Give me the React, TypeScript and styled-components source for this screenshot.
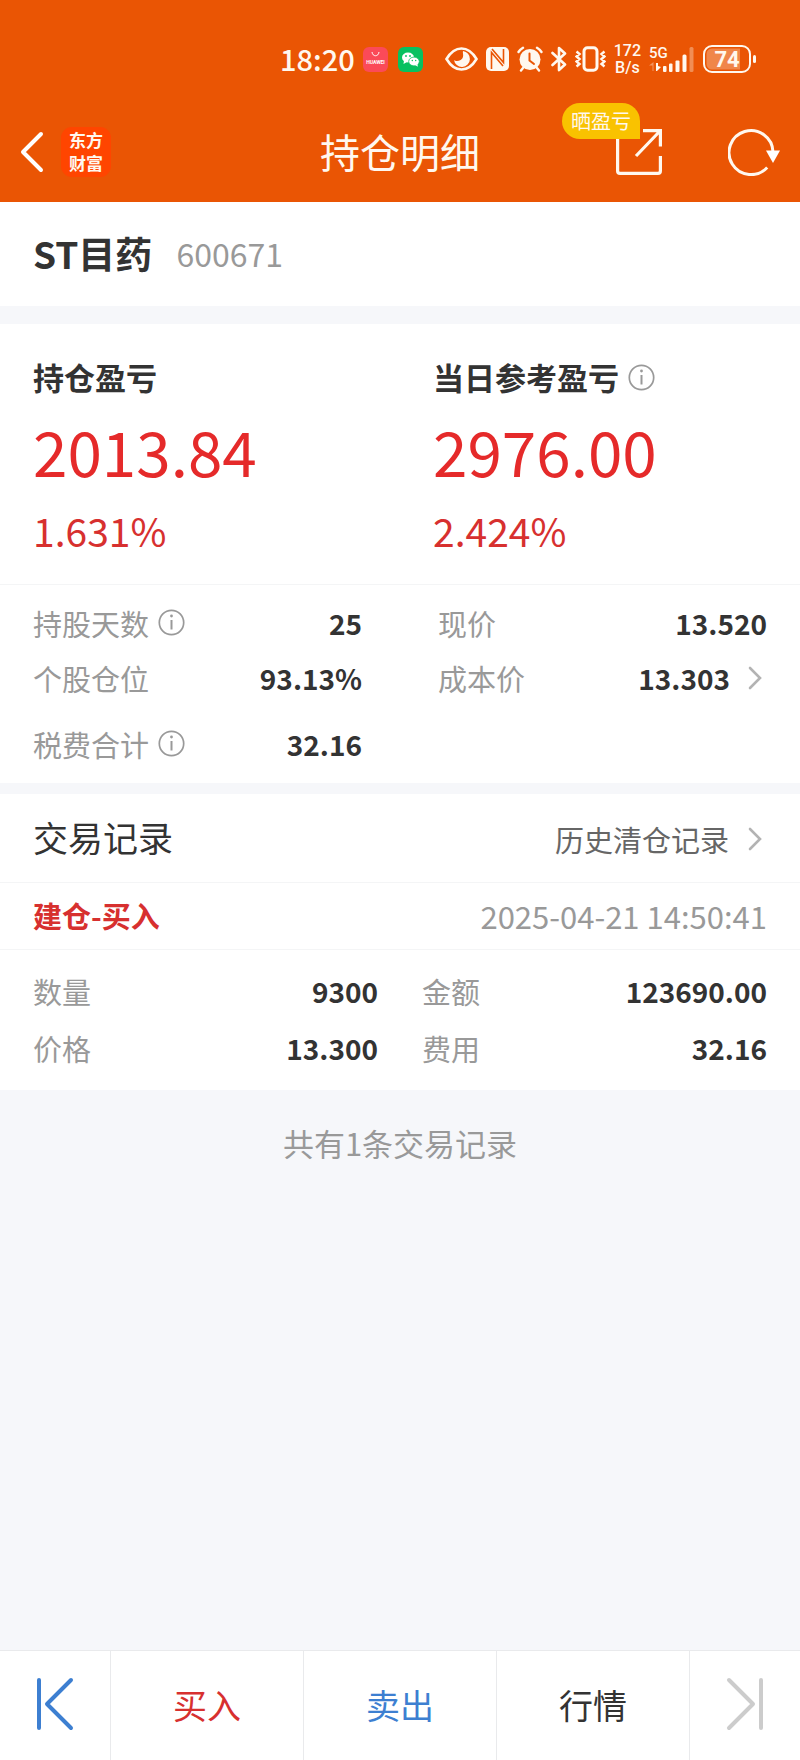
import React from "react";
import styled, { createGlobalStyle } from "styled-components";

const sans = `"Noto Sans CJK SC", "Noto Sans", sans-serif`;

const c = {
  brand: "#ea5504",
  text: "#333333",
  sub: "#666666",
  muted: "#999999",
  faint: "#b3b3b3",
  up: "#e52a2a",
  upSoft: "#d7302f",
  down: "#3d7fd1",
  page: "#f6f7fa",
  line: "#f4f5f6",
  bar: "#e9eaec",
  disabled: "#cccccc",
};

const GlobalStyle = createGlobalStyle`
  * { box-sizing: border-box; }
  body { margin: 0; background: ${c.page}; font-family: ${sans}; color: ${c.text}; }
  button { font: inherit; color: inherit; background: none; border: 0; padding: 0; cursor: pointer; }
  h1, h2, dl, dt, dd, p { margin: 0; font-weight: inherit; }
  svg { display: block; flex: none; }
`;

const Page = styled.div`
  min-height: 100vh;
  display: flex;
  flex-direction: column;
`;

const Header = styled.header`
  background: ${c.brand};
  color: #fff8ef;
`;

const StatusBar = styled.div`
  height: 102px;
  padding: 16px 44px 0 0;
  display: flex;
  align-items: center;
  justify-content: flex-end;
  gap: 8px;
`;

const Clock = styled.time`
  padding-bottom: 2px;
  font-size: 29px;
  font-weight: 500;
  line-height: 30px;
`;

const AppBadges = styled.div`
  display: flex;
  gap: 10px;
  margin-right: 14px;
`;

const NetSpeed = styled.div`
  display: flex;
  flex-direction: column;
  align-items: center;
  font-family: Roboto, sans-serif;
  font-size: 16px;
  line-height: 17px;
  font-weight: 500;
`;

const NavBar = styled.nav`
  height: 100px;
  padding: 0 20px;
  display: grid;
  grid-template-columns: 1fr auto 1fr;
  align-items: center;
`;

const NavSide = styled.div<{ $end?: boolean }>`
  display: flex;
  align-items: center;
  justify-content: ${(p) => (p.$end ? "flex-end" : "flex-start")};
  gap: ${(p) => (p.$end ? 66 : 17)}px;
`;

const NavTitle = styled.h1`
  padding-bottom: 3px;
  font-size: 40px;
  line-height: 48px;
`;

const Logo = styled.span`
  width: 50px;
  height: 50px;
  padding: 1px 0 3px;
  border-radius: 11px;
  background: #ff4500;
  display: flex;
  flex-direction: column;
  align-items: center;
  font-size: 17px;
  line-height: 23px;
  font-weight: 700;
`;

const ShareButton = styled.button`
  position: relative;
`;

const ShareTip = styled.span`
  position: absolute;
  right: 22px;
  bottom: 36px;
  padding: 0 9px;
  border-radius: 18px 18px 0 18px;
  background: #f9c200;
  font-size: 20px;
  line-height: 36px;
  white-space: nowrap;
`;

const Panel = styled.section<{ $gap?: number }>`
  background: #fff;
  margin-bottom: ${(p) => p.$gap ?? 0}px;
`;

const StockRow = styled.div`
  height: 104px;
  padding: 0 33px 2px;
  display: flex;
  align-items: center;
  gap: 24px;
`;

const StockName = styled.h2`
  font-size: 37px;
  font-weight: 700;
`;

const StockCode = styled.span`
  font-size: 32px;
  color: ${c.muted};
`;

const Profits = styled.div`
  display: grid;
  grid-template-columns: 1fr 1fr;
  padding: 30px 0 24px;
  border-bottom: 1px solid ${c.line};
`;

const Profit = styled.div`
  padding-left: 33px;
`;

const ProfitTitle = styled.h2`
  display: flex;
  align-items: center;
  gap: 9px;
  font-size: 31px;
  line-height: 46px;
  font-weight: 700;
`;

const ProfitAmount = styled.p`
  font-size: 62px;
  line-height: 100px;
  color: ${c.up};
`;

const ProfitRate = styled.p`
  font-size: 39px;
  line-height: 60px;
  color: ${c.upSoft};
`;

const Facts = styled.dl<{ $gap: number }>`
  display: grid;
  grid-template-columns: 1fr 1fr;
  column-gap: ${(p) => p.$gap}px;
  padding: 0 33px;
`;

const FactBlock = styled.div<{ $row: number; $top: number; $bottom: number; $space?: number }>`
  display: flex;
  flex-direction: column;
  gap: ${(p) => p.$space ?? 0}px;
  padding: ${(p) => p.$top}px 0 ${(p) => p.$bottom}px;

  ${Facts} > div {
    height: ${(p) => p.$row}px;
  }
`;

const FactRow = styled.div`
  display: flex;
  align-items: center;
`;

const FactLabel = styled.dt`
  display: flex;
  align-items: center;
  gap: 9px;
  margin-right: auto;
  font-size: 29px;
  color: ${c.muted};
`;

const FactValue = styled.dd`
  font-size: 28px;
  font-weight: 700;
`;

const Arrow = styled.button`
  margin: 0 5px 0 18px;
`;

const RecordHead = styled.div`
  height: 89px;
  padding: 0 33px;
  display: flex;
  align-items: center;
  justify-content: space-between;
  border-bottom: 1px solid ${c.line};
`;

const RecordTitle = styled.h2`
  padding-bottom: 4px;
  font-size: 35px;
`;

const HistoryLink = styled.a`
  display: flex;
  align-items: center;
  gap: 19px;
  padding: 2px 5px 0 0;
  font-size: 29px;
  color: ${c.sub};
  text-decoration: none;
`;

const TradeHead = styled.div`
  height: 67px;
  padding: 0 33px 2px;
  display: flex;
  align-items: center;
  justify-content: space-between;
  border-bottom: 1px solid ${c.line};
`;

const TradeKind = styled.span`
  font-size: 29px;
  font-weight: 700;
  color: ${c.upSoft};
`;

const TradeTime = styled.time`
  font-size: 31px;
  color: ${c.muted};
`;

const RecordCount = styled.p`
  flex: 1;
  padding-top: 30px;
  text-align: center;
  font-size: 31px;
  line-height: 46px;
  color: ${c.muted};
`;

const ActionBar = styled.footer`
  display: grid;
  grid-template-columns: 110px 1fr 1fr 1fr 111px;
  height: 110px;
  background: #fff;
  border-top: 1px solid ${c.bar};
`;

const Action = styled.button<{ $color: string }>`
  display: flex;
  align-items: center;
  justify-content: center;
  padding-bottom: 3px;
  font-size: 34px;
  color: ${(p) => p.$color};

  & + & {
    border-left: 1px solid ${c.bar};
  }
`;

const InfoButton = () => (
  <button type="button" aria-label="说明">
    <svg width="27" height="27" viewBox="0 0 27 27" fill="none" stroke={c.muted}>
      <circle cx="13.5" cy="13.5" r="12.2" strokeWidth="1.7" />
      <path d="M13.5 11v9.5" strokeWidth="2" />
      <circle cx="13.5" cy="7" r="1.4" fill={c.muted} stroke="none" />
    </svg>
  </button>
);

const Chevron = () => (
  <svg width="14" height="24" viewBox="0 0 14 24" fill="none" stroke={c.faint} strokeWidth="2.6" strokeLinecap="round">
    <path d="M2 2l10 10L2 22" />
  </svg>
);

const StatusIcons = () => (
  <>
    <svg width="33" height="26" viewBox="0 0 33 26" fill="none" stroke="currentColor">
      <path d="M1.5 13C6 5.5 11 2.5 16.5 2.5S27 5.5 31.5 13C27 20.5 22 23.5 16.5 23.5S6 20.5 1.5 13z" strokeWidth="2.6" />
      <path d="M18 5a8 8 0 1 1-9 9c2 2 8 1 9-3 .6-2.5-.5-4.5 0-6z" fill="currentColor" stroke="none" />
    </svg>
    <svg width="23" height="26" viewBox="0 0 23 26">
      <rect x="0" y="1" width="23" height="24" rx="5" fill="currentColor" />
      <path d="M5.5 23V6.5L17 20M6 3l11.500 13.500V3" fill="none" stroke={c.brand} strokeWidth="1.600" />
    </svg>
    <svg width="26" height="26" viewBox="0 0 26 26" fill="none" stroke="currentColor" strokeLinecap="round">
      <circle cx="13" cy="13.5" r="10.5" fill="currentColor" stroke="none" />
      <path d="M1.5 6A14 14 0 0 1 6 1.8M24.5 6A14 14 0 0 0 20 1.8M6 22l-2 2.5M20 22l2 2.5" strokeWidth="2.4" />
      <path d="M12.5 7.5v7l4.5 3.5" stroke={c.brand} strokeWidth="2" />
    </svg>
    <svg width="16" height="26" viewBox="0 0 16 26" fill="none" stroke="currentColor" strokeWidth="2.6" strokeLinejoin="round" strokeLinecap="round">
      <path d="M1.5 7L14 18.5 8 24V2l6 5.5L1.5 19" />
    </svg>
    <svg width="31" height="26" viewBox="0 0 31 26" fill="none" stroke="currentColor">
      <rect x="9" y="1.7" width="13" height="22.6" rx="3.5" strokeWidth="3" />
      <path d="M1.5 5.5l3 2.5-3 2.5 3 2.5-3 2.5 3 2.5-3 2.5M29.5 5.5l-3 2.5 3 2.5-3 2.5 3 2.5-3 2.5 3 2.5" strokeWidth="2.4" />
    </svg>
  </>
);

const Signal = () => (
  <svg width="46" height="28" viewBox="0 0 46 28" fill="currentColor">
    <text x="0" y="13" fontFamily="Roboto, sans-serif" fontSize="15" fontWeight="500">5G</text>
    <path d="M3.5 26v-5.5H0L4.5 17v9z" opacity=".4" />
    <path d="M7 18h2v3l3 1-4 4H7z" />
    <rect x="14" y="21" width="3.5" height="6" rx="1" />
    <rect x="20" y="18.5" width="3.5" height="8.5" rx="1" />
    <rect x="26.5" y="15.5" width="4" height="11.5" rx="1" />
    <rect x="33.5" y="9.5" width="4" height="17.5" rx="1.5" />
    <rect x="40.5" y="2" width="4" height="25" rx="1.5" opacity=".35" />
  </svg>
);

const Battery = () => (
  <svg width="53" height="28" viewBox="0 0 53 28" fill="none" stroke="currentColor">
    <rect x="1" y="1" width="46" height="26" rx="8" strokeWidth="2" />
    <path d="M9 3.5h28v21H9a5.5 5.5 0 0 1-5.5-5.5V9A5.5 5.5 0 0 1 9 3.5z" fill="currentColor" stroke="none" opacity=".3" />
    <rect x="50" y="10" width="3" height="8" rx="1.5" fill="currentColor" stroke="none" />
    <text x="24" y="22" textAnchor="middle" fontFamily="Roboto, sans-serif" fontSize="22" fontWeight="700" fill="currentColor" stroke="none">74</text>
  </svg>
);

const HuaweiBadge = () => (
  <svg width="25" height="25" viewBox="0 0 25 25" fill="none">
    <rect width="25" height="25" rx="6" fill="#fb4a58" />
    <path d="M9 5c.5 5 6.5 5 7 0" stroke="#fff" strokeWidth="1" />
    <text x="12.5" y="17" textAnchor="middle" fontFamily="Roboto, sans-serif" fontSize="5" fontWeight="700" fill="#fff">HUAWEI</text>
  </svg>
);

const WechatBadge = () => (
  <svg width="25" height="25" viewBox="0 0 25 25">
    <rect width="25" height="25" rx="6" fill="#07c160" />
    <g fill="#fff">
      <ellipse cx="10" cy="10.5" rx="6" ry="5" />
      <path d="M6 13.5l-.5 3.5 3.5-2z" />
      <ellipse cx="16" cy="14.5" rx="5.3" ry="4.4" stroke="#07c160" strokeWidth=".8" />
      <path d="M17 18l2.8 1.8-.3-2.8z" />
    </g>
    <g fill="#07c160">
      <circle cx="8" cy="9" r=".9" />
      <circle cx="12" cy="9" r=".9" />
      <circle cx="14.3" cy="13.5" r=".7" />
      <circle cx="17.7" cy="13.5" r=".7" />
    </g>
  </svg>
);

type FactProps = { label: string; value: string; info?: boolean; more?: boolean };

const Fact = ({ label, value, info, more }: FactProps) => (
  <FactRow>
    <FactLabel>
      {label}
      {info && <InfoButton />}
    </FactLabel>
    <FactValue>{value}</FactValue>
    {more && (
      <Arrow type="button" aria-label={`${label}详情`}>
        <Chevron />
      </Arrow>
    )}
  </FactRow>
);

export default function App() {
  return (
    <Page>
      <GlobalStyle />
      <Header>
        <StatusBar>
          <Clock>18:20</Clock>
          <AppBadges>
            <HuaweiBadge />
            <WechatBadge />
          </AppBadges>
          <StatusIcons />
          <NetSpeed>
            <span>172</span>
            <span>B/s</span>
          </NetSpeed>
          <Signal />
          <Battery />
        </StatusBar>
        <NavBar>
          <NavSide>
            <button type="button" aria-label="返回">
              <svg width="24" height="42" viewBox="0 0 24 42" fill="none" stroke="#fff" strokeWidth="4" strokeLinecap="round" strokeLinejoin="round">
                <path d="M21 3L3 21l18 18" />
              </svg>
            </button>
            <Logo>
              <span>东方</span>
              <span>财富</span>
            </Logo>
          </NavSide>
          <NavTitle>持仓明细</NavTitle>
          <NavSide $end>
            <ShareButton type="button">
              <svg width="46" height="46" viewBox="0 0 46 46" fill="none" stroke="currentColor" strokeWidth="3.2">
                <path d="M1.6 8v34a2.4 2.4 0 0 0 2.4 2.4h38a2.4 2.4 0 0 0 2.4-2.4V27" />
                <path d="M27 1.6h17.4V17.5M43.5 2.5L20 27" />
              </svg>
              <ShareTip>晒盈亏</ShareTip>
            </ShareButton>
            <button type="button" aria-label="刷新">
              <svg width="52" height="48" viewBox="0 0 52 48" fill="none" stroke="currentColor" strokeWidth="3">
                <path d="M39.2 39.5A22 22 0 1 1 45 24" />
                <path d="M38 22.5h14l-7 12.5z" fill="#fff" stroke="none" />
              </svg>
            </button>
          </NavSide>
        </NavBar>
      </Header>

      <Panel $gap={18}>
        <StockRow>
          <StockName>ST目药</StockName>
          <StockCode>600671</StockCode>
        </StockRow>
      </Panel>

      <Panel $gap={11}>
        <Profits>
          <Profit>
            <ProfitTitle>持仓盈亏</ProfitTitle>
            <ProfitAmount>2013.84</ProfitAmount>
            <ProfitRate>1.631%</ProfitRate>
          </Profit>
          <Profit>
            <ProfitTitle>
              当日参考盈亏
              <InfoButton />
            </ProfitTitle>
            <ProfitAmount>2976.00</ProfitAmount>
            <ProfitRate>2.424%</ProfitRate>
          </Profit>
        </Profits>
        <FactBlock $row={55} $top={10} $bottom={12} $space={11}>
          <Facts $gap={76}>
            <Fact label="持股天数" value="25" info />
            <Fact label="现价" value="13.520" />
            <Fact label="个股仓位" value="93.13%" />
            <Fact label="成本价" value="13.303" more />
          </Facts>
          <Facts $gap={76}>
            <Fact label="税费合计" value="32.16" info />
          </Facts>
        </FactBlock>
      </Panel>

      <Panel>
        <RecordHead>
          <RecordTitle>交易记录</RecordTitle>
          <HistoryLink href="#history">
            历史清仓记录
            <Chevron />
          </HistoryLink>
        </RecordHead>
        <TradeHead>
          <TradeKind>建仓-买入</TradeKind>
          <TradeTime>2025-04-21 14:50:41</TradeTime>
        </TradeHead>
        <FactBlock $row={57} $top={12} $bottom={14}>
          <Facts $gap={44}>
            <Fact label="数量" value="9300" />
            <Fact label="金额" value="123690.00" />
            <Fact label="价格" value="13.300" />
            <Fact label="费用" value="32.16" />
          </Facts>
        </FactBlock>
      </Panel>

      <RecordCount>共有1条交易记录</RecordCount>

      <ActionBar>
        <Action type="button" aria-label="上一个" $color={c.down}>
          <svg width="38" height="54" viewBox="0 0 38 54" fill="none" stroke="currentColor" strokeWidth="4" strokeLinecap="round" strokeLinejoin="round">
            <path d="M3 3v48M35 3L11 27l24 24" />
          </svg>
        </Action>
        <Action type="button" $color={c.upSoft}>买入</Action>
        <Action type="button" $color={c.down}>卖出</Action>
        <Action type="button" $color={c.text}>行情</Action>
        <Action type="button" aria-label="下一个" $color={c.disabled}>
          <svg width="38" height="54" viewBox="0 0 38 54" fill="none" stroke="currentColor" strokeWidth="4" strokeLinecap="round" strokeLinejoin="round">
            <path d="M35 3v48M3 3l24 24L3 51" />
          </svg>
        </Action>
      </ActionBar>
    </Page>
  );
}
